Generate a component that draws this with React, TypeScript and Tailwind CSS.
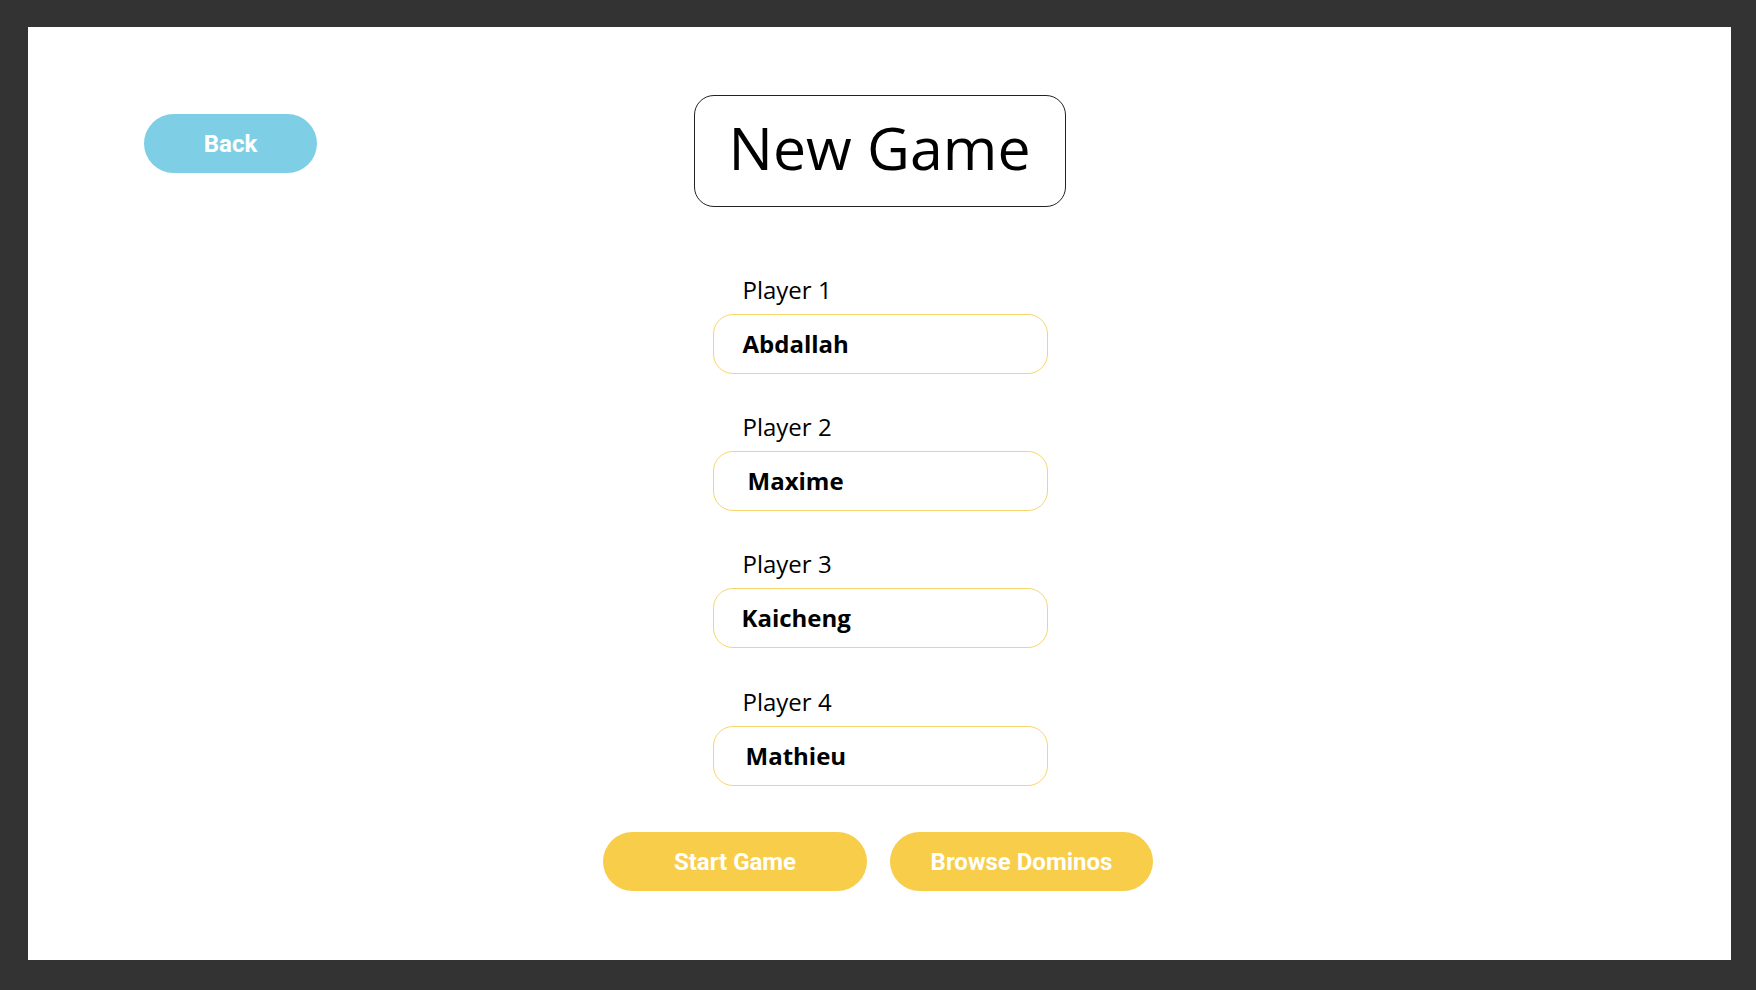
import React from "react";

const players = [
  { label: "Player 1", name: "Abdallah", pad: "pl-[29px]" },
  { label: "Player 2", name: "Maxime", pad: "pl-[34px]" },
  { label: "Player 3", name: "Kaicheng", pad: "pl-[28px]" },
  { label: "Player 4", name: "Mathieu", pad: "pl-[32px]" },
];

export default function App() {
  return (
    <div className="w-[1756px] h-[990px] bg-[#333333] pl-[28px] pr-[25px] pt-[27px] pb-[30px]">
      <div className="w-full h-full bg-white flex flex-col items-center">
        <div className="w-full grid grid-cols-[1fr_auto_1fr] pt-[68px]">
          <div className="pl-[116px] pt-[19px]">
            <button className="w-[173px] h-[59px] rounded-full bg-[#7ecfe6] text-white text-[24px] font-bold font-['Roboto',sans-serif]">
              Back
            </button>
          </div>
          <div className="w-[372px] h-[112px] rounded-[20px] border border-[#222222] flex items-center justify-center">
            <span className="font-['Open_Sans',sans-serif] text-[59px] leading-none text-black pb-[8px]">
              New Game
            </span>
          </div>
          <div />
        </div>

        <div className="flex flex-col gap-[38px] mt-[68px] w-[335px] ml-[1px]">
          {players.map((p, i) => (
            <div key={p.label} className={`flex flex-col gap-[9px] ${i === 3 ? "mt-[1px]" : ""}`}>
              <div className="pl-[30px] font-['Open_Sans',sans-serif] text-[24px] leading-[30px] text-black">
                {p.label}
              </div>
              <div
                className={`h-[60px] rounded-[20px] border border-[#f8d56c] flex items-center ${p.pad}`}
              >
                <span className="font-['Open_Sans',sans-serif] font-bold text-[24px] leading-[30px] text-black">
                  {p.name}
                </span>
              </div>
            </div>
          ))}
        </div>

        <div className="flex gap-[23px] mt-[46px] ml-[-3px]">
          <button className="w-[264px] h-[59px] rounded-full bg-[#f8cd4a] text-white text-[24px] font-bold font-['Roboto',sans-serif]">
            Start Game
          </button>
          <button className="w-[263px] h-[59px] rounded-full bg-[#f8cd4a] text-white text-[24px] font-bold font-['Roboto',sans-serif]">
            Browse Dominos
          </button>
        </div>
      </div>
    </div>
  );
}
